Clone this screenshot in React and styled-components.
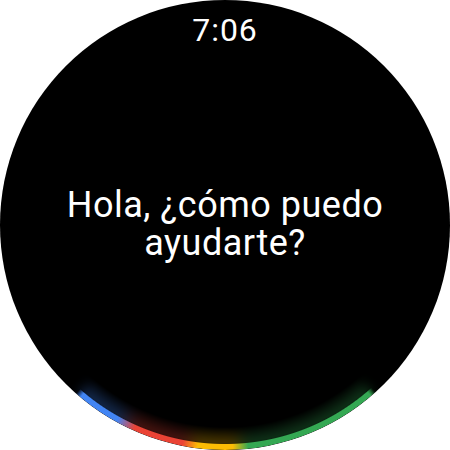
import React from "react";
import styled, { createGlobalStyle } from "styled-components";

const GlobalStyle = createGlobalStyle`
  html, body {
    margin: 0;
    padding: 0;
    background: #ffffff;
  }
`;

const ARC = `conic-gradient(
  from 0deg,
  transparent 0deg 138deg,
  #34a853 139.5deg 174deg,
  #fbbc04 178deg 187deg,
  #ea4335 191deg 204deg,
  #4285f4 209deg 220deg,
  transparent 221.5deg 360deg
)`;

const Watch = styled.div`
  position: relative;
  width: 450px;
  height: 450px;
  border-radius: 50%;
  background: #000000;
  overflow: hidden;
  display: flex;
  flex-direction: column;
  align-items: center;
  font-family: Roboto, "Noto Sans", sans-serif;
  color: #ffffff;
`;

const Time = styled.div`
  padding-top: 11px;
  font-size: 32px;
  line-height: 38px;
  letter-spacing: 1px;
`;

const Message = styled.div`
  flex: 1;
  display: flex;
  align-items: center;
  justify-content: center;
  text-align: center;
  font-size: 36px;
  line-height: 38px;
  letter-spacing: 0.5px;
  padding-bottom: 52px;
`;

const Ring = styled.div`
  position: absolute;
  inset: 0;
  border-radius: 50%;
  background: ${ARC};
  -webkit-mask: radial-gradient(circle, transparent 218.5px, #000 219.5px, #000 225px);
  mask: radial-gradient(circle, transparent 218.5px, #000 219.5px, #000 225px);
`;

const Glow = styled.div`
  position: absolute;
  inset: 0;
  border-radius: 50%;
  background: ${ARC};
  opacity: 0.28;
  filter: blur(6px);
  -webkit-mask: radial-gradient(circle, transparent 202px, #000 217px, #000 225px);
  mask: radial-gradient(circle, transparent 202px, #000 217px, #000 225px);
`;

export default function App() {
  return (
    <>
      <GlobalStyle />
      <Watch>
        <Time>7:06</Time>
        <Message>
          Hola, ¿cómo puedo
          <br />
          ayudarte?
        </Message>
        <Glow />
        <Ring />
      </Watch>
    </>
  );
}
